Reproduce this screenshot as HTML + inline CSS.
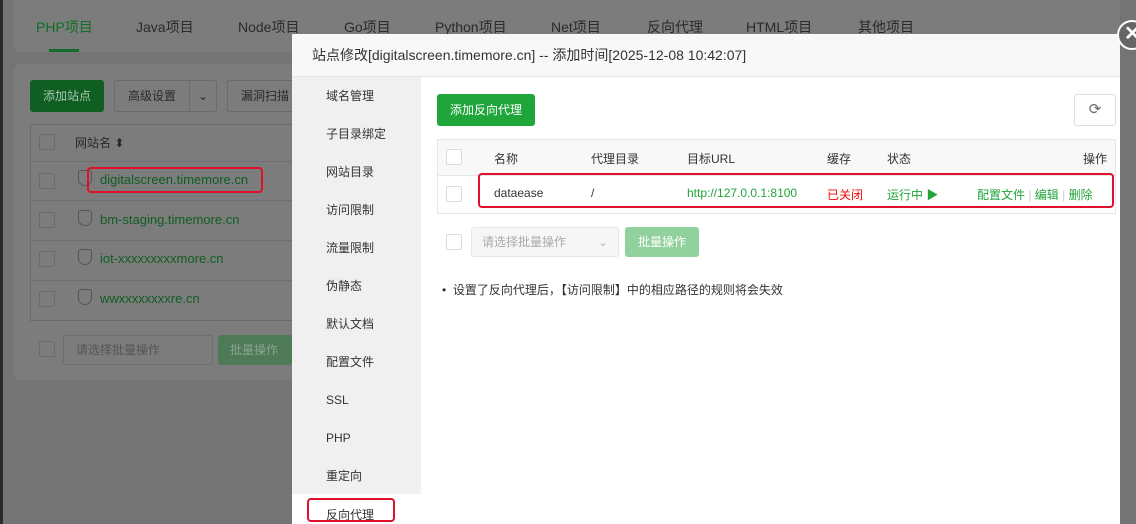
<!DOCTYPE html>
<html><head><meta charset="utf-8"><style>
*{box-sizing:border-box;margin:0;padding:0}
body{width:1136px;height:524px;overflow:hidden;background:#747474;font-family:"Liberation Sans","Noto Sans CJK SC",sans-serif;font-size:12px;position:relative;color:#333}
.a{position:absolute}
.pan{background:#7c7c7c;border-radius:6px}
.tab{font-size:14px;color:#2a2a2a;top:17px}
.cb{width:16px;height:16px;border:1px solid #6a6a6a;border-radius:2px;background:#7c7c7c}
.site{color:#0f5e22;font-size:13px;left:100px}
.menu div{height:38px;line-height:38px;padding-left:34px;font-size:12px;color:#333}
.red{border:2px solid #e0102c;border-radius:4px}
.g{color:#20a53a}
.cb2{width:16px;height:16px;border:1px solid #dcdcdc;border-radius:2px;background:#fff}
</style></head><body>
<div class="a" style="left:0;top:0;width:3px;height:524px;background:#2a2a2a"></div>
<div class="a pan" style="left:14px;top:-6px;width:1110px;height:58px"></div>
<div class="a tab" style="left:36px;color:#0f6e27">PHP项目</div>
<div class="a" style="left:49px;top:49px;width:30px;height:3px;background:#0f6e27"></div>
<div class="a tab" style="left:136px">Java项目</div>
<div class="a tab" style="left:238px">Node项目</div>
<div class="a tab" style="left:344px">Go项目</div>
<div class="a tab" style="left:435px">Python项目</div>
<div class="a tab" style="left:551px">Net项目</div>
<div class="a tab" style="left:647px">反向代理</div>
<div class="a tab" style="left:746px">HTML项目</div>
<div class="a tab" style="left:858px">其他项目</div>
<div class="a pan" style="left:14px;top:64px;width:1110px;height:316px"></div>
<div class="a" style="left:30px;top:80px;width:74px;height:32px;background:#0f5e22;border-radius:3px;color:#aac8b0;line-height:32px;text-align:center;font-size:12px">添加站点</div>
<div class="a" style="left:114px;top:80px;width:103px;height:32px;border:1px solid #6a6a6a;border-radius:3px;line-height:30px;padding-left:13px;color:#2a2a2a">高级设置 <span style="position:absolute;left:74px;top:0;border-left:1px solid #6a6a6a;padding-left:8px;height:30px">⌄</span></div>
<div class="a" style="left:227px;top:80px;width:80px;height:32px;border:1px solid #6a6a6a;border-radius:3px;line-height:30px;padding-left:13px;color:#2a2a2a">漏洞扫描</div>
<div class="a" style="left:30px;top:124px;width:270px;height:197px;border:1px solid #6a6a6a"></div>
<div class="a cb" style="left:39px;top:134px"></div>
<div class="a" style="left:75px;top:134px;color:#2a2a2a">网站名 ⬍</div>
<div class="a" style="left:31px;top:161px;width:269px;border-top:1px solid #6e6e6e"></div>
<div class="a cb" style="left:39px;top:173px"></div><div class="a site" style="top:172px">digitalscreen.timemore.cn</div>
<div class="a" style="left:31px;top:200px;width:269px;border-top:1px solid #6e6e6e"></div>
<div class="a cb" style="left:39px;top:212px"></div><div class="a site" style="top:212px">bm-staging.timemore.cn</div>
<div class="a" style="left:31px;top:240px;width:269px;border-top:1px solid #6e6e6e"></div>
<div class="a cb" style="left:39px;top:251px"></div><div class="a site" style="top:251px">iot-xxxxxxxxxmore.cn</div>
<div class="a" style="left:31px;top:280px;width:269px;border-top:1px solid #6e6e6e"></div>
<div class="a cb" style="left:39px;top:291px"></div><div class="a site" style="top:291px">wwxxxxxxxxre.cn</div>
<div class="a" style="left:78px;top:170px;width:14px;height:16px;border:1.5px solid #555;border-radius:3px 3px 7px 7px"></div>
<div class="a" style="left:78px;top:210px;width:14px;height:16px;border:1.5px solid #555;border-radius:3px 3px 7px 7px"></div>
<div class="a" style="left:78px;top:249px;width:14px;height:16px;border:1.5px solid #555;border-radius:3px 3px 7px 7px"></div>
<div class="a" style="left:78px;top:289px;width:14px;height:16px;border:1.5px solid #555;border-radius:3px 3px 7px 7px"></div>
<div class="a red" style="left:87px;top:167px;width:176px;height:26px"></div>
<div class="a cb" style="left:39px;top:341px"></div>
<div class="a" style="left:63px;top:335px;width:150px;height:30px;border:1px solid #6e6e6e;border-radius:3px;color:#555;line-height:28px;padding-left:12px">请选择批量操作</div>
<div class="a" style="left:218px;top:335px;width:74px;height:30px;background:#4e7a58;border-radius:3px;color:#8aa590;line-height:30px;padding-left:12px">批量操作</div>

<div class="a" style="left:292px;top:34px;width:828px;height:490px;background:#fff"></div>
<div class="a" style="left:292px;top:34px;width:828px;height:43px;background:#f8f8f8;border-bottom:1px solid #e6e6e6;font-size:14px;line-height:43px;padding-left:20px;color:#333">站点修改[digitalscreen.timemore.cn] -- 添加时间[2025-12-08 10:42:07]</div>
<div class="a menu" style="left:292px;top:77px;width:129px;height:417px;background:#f0f0f0">
<div>域名管理</div><div>子目录绑定</div><div>网站目录</div><div>访问限制</div><div>流量限制</div><div>伪静态</div><div>默认文档</div><div>配置文件</div><div>SSL</div><div>PHP</div><div>重定向</div>
</div>
<div class="a" style="left:326px;top:506px;font-size:12px;color:#333">反向代理</div>
<div class="a red" style="left:307px;top:498px;width:88px;height:24px"></div>
<div class="a" style="left:1120px;top:0;width:16px;height:524px;background:#747474"></div>
<div class="a" style="left:1117px;top:20px;width:30px;height:30px;border-radius:50%;background:#666;border:2px solid #fff;color:#fff;font-size:20px;line-height:25px;padding-left:5px;font-weight:bold">✕</div>

<div class="a" style="left:437px;top:94px;width:98px;height:32px;background:#20a53a;border-radius:3px;color:#fff;line-height:32px;text-align:center">添加反向代理</div>
<div class="a" style="left:1074px;top:94px;width:42px;height:32px;border:1px solid #ddd;border-radius:3px;text-align:center;line-height:30px;color:#666;font-size:15px">⟳</div>
<div class="a" style="left:437px;top:139px;width:679px;height:75px;border:1px solid #e6e6e6"></div>
<div class="a" style="left:438px;top:140px;width:677px;height:36px;background:#f8f8f8;border-bottom:1px solid #e6e6e6"></div>
<div class="a cb2" style="left:446px;top:149px"></div>
<div class="a" style="left:494px;top:150px">名称</div>
<div class="a" style="left:591px;top:150px">代理目录</div>
<div class="a" style="left:687px;top:150px">目标URL</div>
<div class="a" style="left:827px;top:150px">缓存</div>
<div class="a" style="left:887px;top:150px">状态</div>
<div class="a" style="left:1083px;top:150px">操作</div>
<div class="a cb2" style="left:446px;top:186px"></div>
<div class="a" style="left:494px;top:186px">dataease</div>
<div class="a" style="left:591px;top:186px">/</div>
<div class="a g" style="left:687px;top:186px">http://127.0.0.1:8100</div>
<div class="a" style="left:827px;top:186px;color:#ef0808">已关闭</div>
<div class="a g" style="left:887px;top:186px">运行中 ▶</div>
<div class="a g" style="left:977px;top:186px">配置文件 <span style="color:#ccc">|</span> 编辑 <span style="color:#ccc">|</span> 删除</div>
<div class="a red" style="left:478px;top:173px;width:636px;height:35px"></div>
<div class="a cb2" style="left:446px;top:234px"></div>
<div class="a" style="left:471px;top:227px;width:148px;height:30px;border:1px solid #e6e6e6;border-radius:3px;background:#f6f6f6;color:#aaa;line-height:28px;padding-left:10px">请选择批量操作<span style="position:absolute;right:10px;color:#bbb">⌄</span></div>
<div class="a" style="left:625px;top:227px;width:74px;height:30px;background:#90d19d;border-radius:3px;color:#fff;line-height:30px;text-align:center">批量操作</div>
<div class="a" style="left:442px;top:281px;color:#333">•&nbsp;&nbsp;设置了反向代理后，【访问限制】中的相应路径的规则将会失效</div>
</body></html>
